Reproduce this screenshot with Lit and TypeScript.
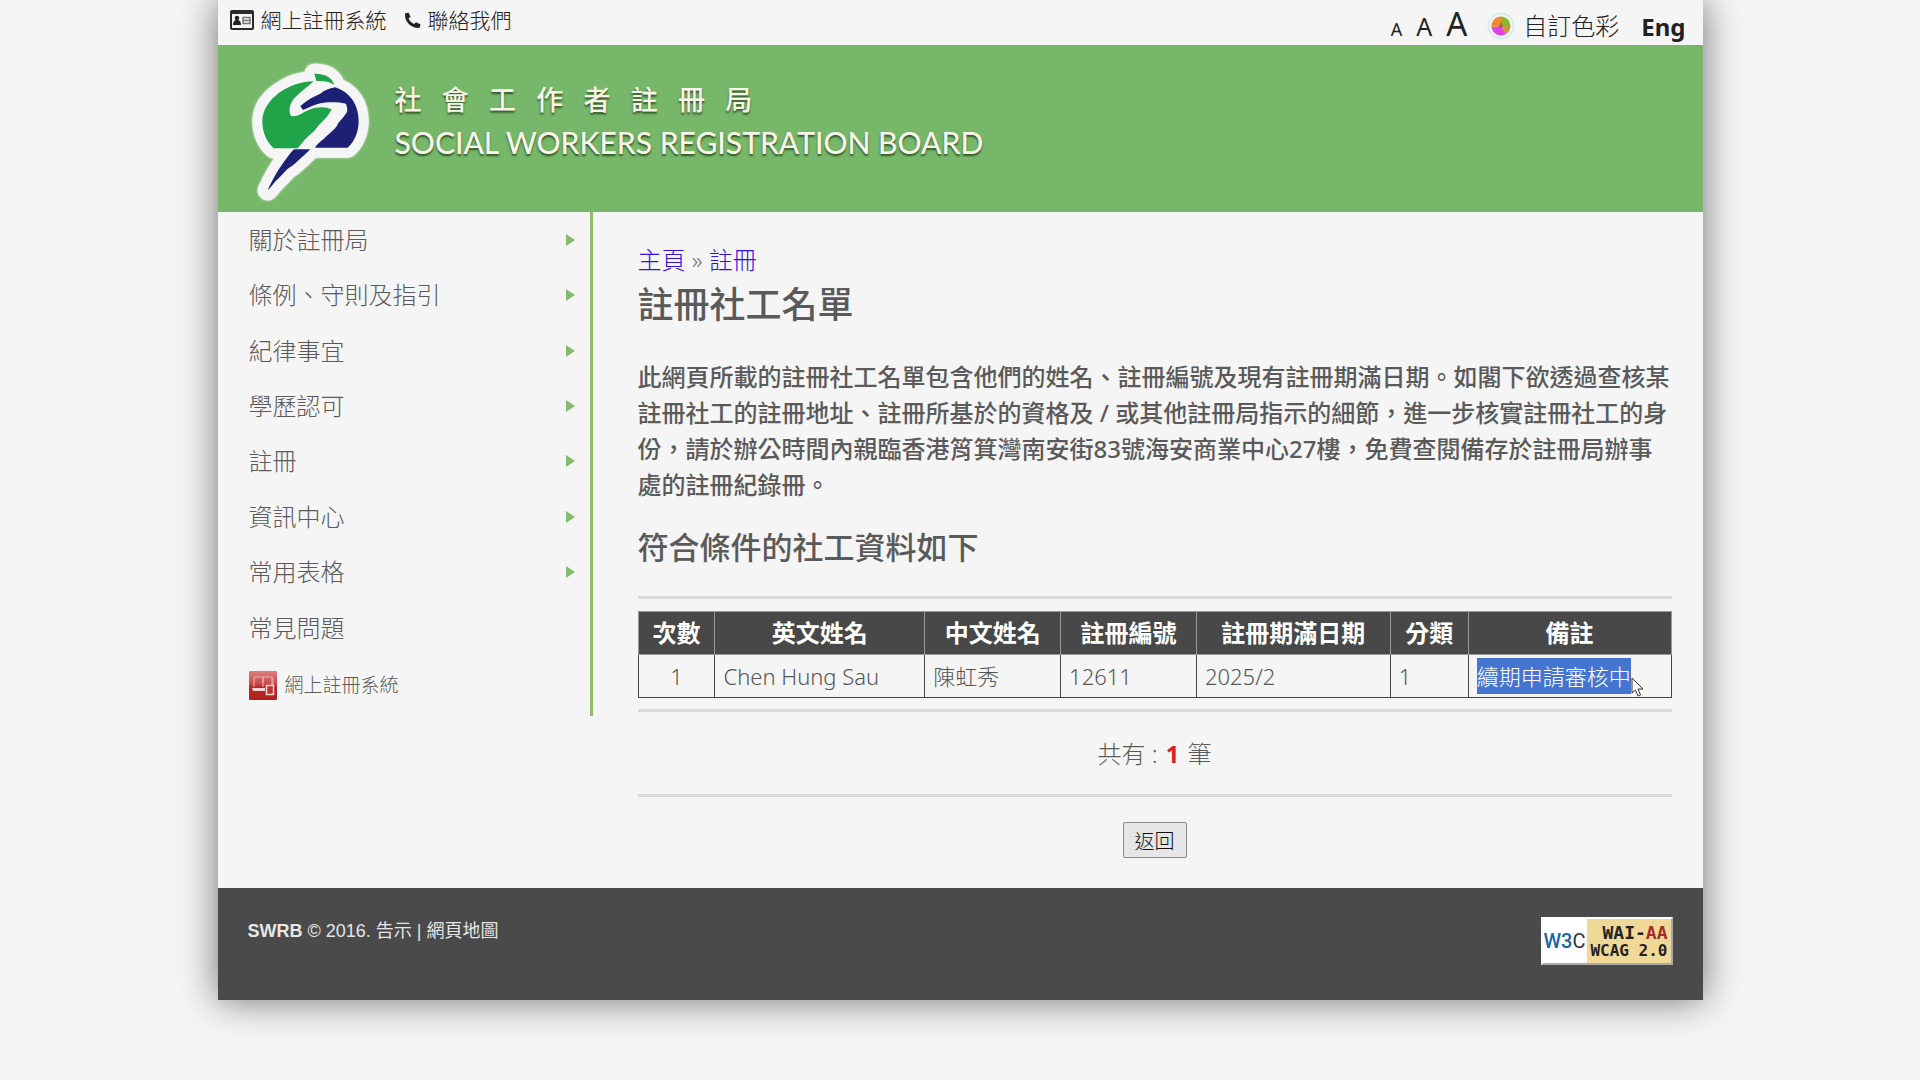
import { LitElement, html, css, svg } from "lit";
import { customElement } from "lit/decorators.js";

const MENU = [
  "關於註冊局",
  "條例、守則及指引",
  "紀律事宜",
  "學歷認可",
  "註冊",
  "資訊中心",
  "常用表格",
];

const COLUMNS = [
  { label: "次數", width: 77 },
  { label: "英文姓名", width: 210 },
  { label: "中文姓名", width: 136 },
  { label: "註冊編號", width: 136 },
  { label: "註冊期滿日期", width: 194 },
  { label: "分類", width: 78 },
  { label: "備註", width: 203 },
];
const TOTAL_WIDTH = COLUMNS.reduce((sum, c) => sum + c.width, 0);

// Board title, set with wide spaces between the characters.
const BOARD_NAME = [..."社會工作者註冊局"].join("\u2002\u2005");

const logoShapes = svg`
  <path class="g" d="M312 220C340 219 366 230 372 254C356 243 340 241 318 242Z"/>
  <path class="g" d="M310 243C240 243 155 295 156 365C157 400 170 425 190 444L262 444C278 425 290 408 305 398C318 388 320 378 332 368C344 356 356 344 364 327C345 318 318 319 300 327C280 334 262 352 242 347C232 330 240 308 252 294C268 276 290 262 310 243Z"/>
  <path class="b" d="M270 318C290 298 312 288 330 280C342 270 358 264 374 261C420 275 446 315 445 365C444 395 432 425 412 442L314 442C325 425 340 418 348 408C358 398 372 388 380 376C384 364 400 352 402 346C414 334 412 326 407 310C380 305 345 304 320 312C305 316 292 324 278 329Z"/>
  <path class="b" d="M300 447L252 447C240 456 238 464 230 472C208 500 190 530 172 570C186 558 190 546 205 534C222 518 228 506 244 498C262 484 280 466 300 447Z"/>`;

@customElement("app-root")
export class AppRoot extends LitElement {
  static styles = css`
    :host {
      display: block;
      min-height: 100vh;
      box-sizing: border-box;
      padding-bottom: 78px;
      background: #f5f5f5;
      color: #5a5a5a;
      font-family: "Noto Sans", "Noto Sans CJK TC", sans-serif;
      font-size: 24px;
      line-height: 36px;
      overflow: hidden;
    }
    * { box-sizing: border-box; }
    a { color: inherit; text-decoration: none; }
    h1, h2, p, ul { margin: 0; padding: 0; }
    svg { display: block; flex: none; }

    .page {
      max-width: 1485px;
      margin: 0 auto;
      background: #f5f5f5;
      box-shadow: 0 0 36px rgba(0, 0, 0, 0.55);
    }

    .top {
      display: flex;
      justify-content: space-between;
      height: 45px;
      padding: 0 17px 0 12px;
      color: #222;
    }
    .quick, .tools { display: flex; }
    .quick { gap: 17px; align-items: center; height: 40px; }
    .quick a {
      display: flex;
      align-items: center;
      gap: 7px;
      font-size: 21px;
      font-weight: 300;
      line-height: 30px;
    }
    .tools { align-items: baseline; padding-top: 4px; line-height: 40px; }
    .tools button {
      border: 0;
      background: none;
      padding: 0;
      font-family: inherit;
      line-height: 40px;
      color: #222;
    }
    .sizes { display: flex; align-items: baseline; gap: 14px; }
    .tools .small { font-size: 18px; }
    .tools .medium { font-size: 25px; }
    .tools .large { font-size: 33px; }
    .tools .colours {
      display: flex;
      align-items: center;
      align-self: center;
      gap: 8px;
      margin: 2px 22px 0 20px;
      font-size: 24px;
      font-weight: 300;
    }
    .lang { font-weight: 700; }

    .banner {
      display: flex;
      gap: 24px;
      height: 167px;
      padding: 17px 32px 0;
      background: #77b769;
    }
    .logo { filter: drop-shadow(0 0 1px #f5f5f5); }
    .halo { fill: #f5f5f5; stroke: #f5f5f5; stroke-width: 60; stroke-linejoin: round; }
    .g { fill: #20a349; }
    .b { fill: #1d2175; }
    .halo .g, .halo .b { fill: inherit; }
    .names {
      padding-top: 18px;
      color: #f7f5ea;
      white-space: nowrap;
      text-shadow: 0 2px 2px rgba(30, 60, 20, 0.8);
    }
    .zh { font-size: 27px; line-height: 40px; font-weight: 500; }
    .en { font-family: Lato, sans-serif; font-size: 30px; line-height: 44px; font-weight: 500; }

    .body { display: flex; align-items: flex-start; }
    .side { flex: 0 0 375px; border-right: 3px solid #8fbd6d; }
    .menu {
      display: grid;
      grid-auto-rows: 1fr;
      min-height: 499px;
      margin-bottom: 5px;
      list-style: none;
      font-weight: 300;
    }
    .menu li { display: flex; align-items: stretch; }
    .menu a {
      flex: 1;
      display: flex;
      align-items: center;
      justify-content: space-between;
      padding: 0 15px 0 31px;
    }
    .menu .online { justify-content: flex-start; gap: 8px; font-size: 19px; padding-top: 4px; }

    .main { flex: 1; min-width: 0; padding: 30px 31px 30px 45px; }
    .crumbs { color: #777; font-weight: 300; }
    .crumbs a { color: #2f12dc; }
    h1 { margin-top: 3px; font-size: 36px; line-height: 48px; font-weight: 500; }
    .intro { margin-top: 30px; font-weight: 500; }
    h2 { margin-top: 22px; font-size: 31px; line-height: 44px; font-weight: 500; }
    hr { height: 3px; border: 0; margin: 0; background: #dadada; }
    .rule-a { margin: 27px 0 12px; }
    .rule-b { margin: 11px 0 24px; }
    .rule-c { margin: 22px 0 25px; }

    table { width: 100%; border-collapse: collapse; table-layout: fixed; }
    th {
      height: 43px;
      padding: 0;
      border: 1px solid #999;
      background: #484848;
      color: #fff;
      font-weight: 700;
      line-height: 36px;
    }
    td {
      height: 43px;
      padding: 0 8px;
      border: 1px solid #444;
      font-size: 22px;
      font-weight: 300;
      line-height: 36px;
      white-space: nowrap;
      color: #555;
    }
    .num { text-align: center; }
    .note { position: relative; }
    .picked { display: inline-block; background: #4375d1; color: #fff; }
    .cursor { position: absolute; left: 162px; top: 22px; }

    .total {
      display: flex;
      justify-content: center;
      gap: 8px;
      font-weight: 300;
    }
    .total b { color: #e02020; font-weight: 700; }
    .back { display: flex; justify-content: center; }
    .back button {
      width: 64px;
      height: 36px;
      padding: 0;
      border: 1px solid #888;
      border-radius: 2px;
      background: #e6e6e6;
      color: #111;
      font-family: inherit;
      font-size: 20px;
      font-weight: 300;
    }

    .foot {
      display: flex;
      justify-content: space-between;
      align-items: flex-start;
      height: 112px;
      padding: 29px 30px 0;
      background: #4a4a4a;
      color: #e6e6e6;
      font-family: "Liberation Sans", "Noto Sans CJK TC", sans-serif;
      font-size: 18px;
      line-height: 28px;
    }
    .badge {
      display: flex;
      width: 132px;
      height: 48px;
      border: 2px solid;
      border-color: #fff #aaa #aaa #fff;
      background: #f0d998;
    }
    .mark {
      display: flex;
      flex: 0 0 44px;
      align-items: center;
      justify-content: center;
      background: #fff;
      color: #1766a6;
      font-family: Roboto, sans-serif;
      font-size: 20px;
      font-weight: 500;
    }
    .mark span { color: #333; font-weight: 400; }
    .wcag {
      flex: 1;
      padding: 5px 3px 0 0;
      text-align: right;
      font-family: "DejaVu Sans Mono", monospace;
      font-weight: 700;
      font-size: 16px;
      line-height: 18px;
      color: #222;
      white-space: nowrap;
    }
    .wcag div:first-child { font-size: 18px; }
    .wcag span { color: #a02c2c; }
  `;

  render() {
    return html`
      <div class="page">
        <div class="top">
          <nav class="quick">
            <a href="#online">
              <svg width="24" height="20" viewBox="0 0 24 20">
                <rect x="1" y="1" width="22" height="18" rx="1" fill="none" stroke="#2a2a2a" stroke-width="2"/>
                <path d="M1 2h22v2H1z" fill="#2a2a2a"/>
                <circle cx="7" cy="8" r="2.3" fill="#222"/>
                <path d="M3 15c0-4 2-5 4-5s4 1 4 5z" fill="#222"/>
                <path d="M13 7.500h7v6h-7zM13 10.500h7" fill="none" stroke="#777" stroke-width="1.500"/>
              </svg>
              網上註冊系統</a>
            <a href="#contact">
              <svg width="17" height="17" viewBox="0 0 17 17">
                <path d="M1 1.500L4.500 0.500L6.500 4.800L4.500 6.500C5.500 8.800 7.500 10.900 10.200 12L12 10.200L16.500 12.200L15.600 16C7.500 16.800 0.200 9.500 1 1.500Z" fill="#222"/>
              </svg>
              聯絡我們</a>
          </nav>
          <div class="tools">
            <div class="sizes">
              <button class="small">A</button>
              <button class="medium">A</button>
              <button class="large">A</button>
            </div>
            <button class="colours">
              <svg width="28" height="28" viewBox="0 0 28 28">
                <circle cx="14" cy="14" r="12.500" fill="#f5f5f5" stroke="#d3ecec" stroke-width="2"/>
                <path d="M14 14V4.500A9.500 9.500 0 0 1 23.500 14Z" fill="#86b92c"/>
                <path d="M14 14H23.500A9.500 9.500 0 0 1 19 22Z" fill="#c99a3c"/>
                <path d="M14 14L19 22A9.500 9.500 0 0 1 4.500 15Z" fill="#dc44e4"/>
                <path d="M14 14L4.500 15A9.500 9.500 0 0 1 14 4.500Z" fill="#f08a2c"/>
                <path d="M14 11v5M12 14h4" stroke="#9a4a3a"/>
              </svg>
              自訂色彩</button>
            <a class="lang" href="#en">Eng</a>
          </div>
        </div>

        <header class="banner">
          <svg class="logo" width="121" height="142" viewBox="119 185 363 426">
            <g class="halo">${logoShapes}</g>
            <g>${logoShapes}</g>
          </svg>
          <div class="names">
            <div class="zh">${BOARD_NAME}</div>
            <div class="en">SOCIAL WORKERS REGISTRATION BOARD</div>
          </div>
        </header>

        <div class="body">
          <nav class="side">
            <ul class="menu">
              ${MENU.map(
                (label) => html`<li><a href="#menu">${label}
                  <svg width="10" height="12" viewBox="0 0 10 12"><path d="M1 0L10 6L1 12Z" fill="#83bc6c"/></svg></a></li>`
              )}
              <li><a href="#faq">常見問題</a></li>
              <li><a class="online" href="#online">
                <svg width="28" height="29" viewBox="0 0 28 29">
                  <defs>
                    <linearGradient id="red" x1="0" y1="0" x2="0" y2="1">
                      <stop offset="0" stop-color="#d98080"/>
                      <stop offset="0.450" stop-color="#c84848"/>
                      <stop offset="0.550" stop-color="#b82828"/>
                      <stop offset="1" stop-color="#b42020"/>
                    </linearGradient>
                  </defs>
                  <rect width="28" height="29" rx="1" fill="url(#red)"/>
                  <path d="M5 16V6h9v10M14 12V6h9v9M24 7v7" fill="none" stroke="#e8b4b4"/>
                  <path d="M3 17h13v3H4z" fill="#f3d6d6"/>
                  <path d="M17.500 14.500h7v9h-7z" fill="#c03030" stroke="#f3d6d6" stroke-width="1.500"/>
                </svg>
                網上註冊系統</a></li>
            </ul>
          </nav>

          <main class="main">
            <nav class="crumbs"><a href="#home">主頁</a> » <a href="#reg">註冊</a></nav>
            <h1>註冊社工名單</h1>
            <p class="intro">此網頁所載的註冊社工名單包含他們的姓名、註冊編號及現有註冊期滿日期。如閣下欲透過查核某註冊社工的註冊地址、註冊所基於的資格及 / 或其他註冊局指示的細節，進一步核實註冊社工的身份，請於辦公時間內親臨香港筲箕灣南安街83號海安商業中心27樓，免費查閱備存於註冊局辦事處的註冊紀錄冊。</p>
            <h2>符合條件的社工資料如下</h2>
            <hr class="rule-a" />
            <table>
              <colgroup>
                ${COLUMNS.map((c) => html`<col style="width:${(c.width / TOTAL_WIDTH) * 100}%" />`)}
              </colgroup>
              <thead>
                <tr>${COLUMNS.map((c) => html`<th scope="col">${c.label}</th>`)}</tr>
              </thead>
              <tbody>
                <tr>
                  <td class="num">1</td>
                  <td>Chen Hung Sau</td>
                  <td>陳虹秀</td>
                  <td>12611</td>
                  <td>2025/2</td>
                  <td>1</td>
                  <td class="note"><span class="picked">續期申請審核中</span>
                    <svg class="cursor" width="13" height="20" viewBox="0 0 13 20">
                      <path d="M1 1V16L4.500 13L7 19L9.500 18L7 12H12Z" fill="#fff" stroke="#333"/>
                    </svg>
                  </td>
                </tr>
              </tbody>
            </table>
            <hr class="rule-b" />
            <p class="total"><span>共有 :</span> <b>1</b> <span>筆</span></p>
            <hr class="rule-c" />
            <div class="back"><button>返回</button></div>
          </main>
        </div>

        <footer class="foot">
          <div><b>SWRB</b> © 2016. <a href="#notice">告示</a> | <a href="#sitemap">網頁地圖</a></div>
          <a class="badge" href="#wcag">
            <div class="mark">W3<span>C</span></div>
            <div class="wcag">
              <div>WAI-<span>AA</span></div>
              <div>WCAG 2.0</div>
            </div>
          </a>
        </footer>
      </div>
    `;
  }
}
